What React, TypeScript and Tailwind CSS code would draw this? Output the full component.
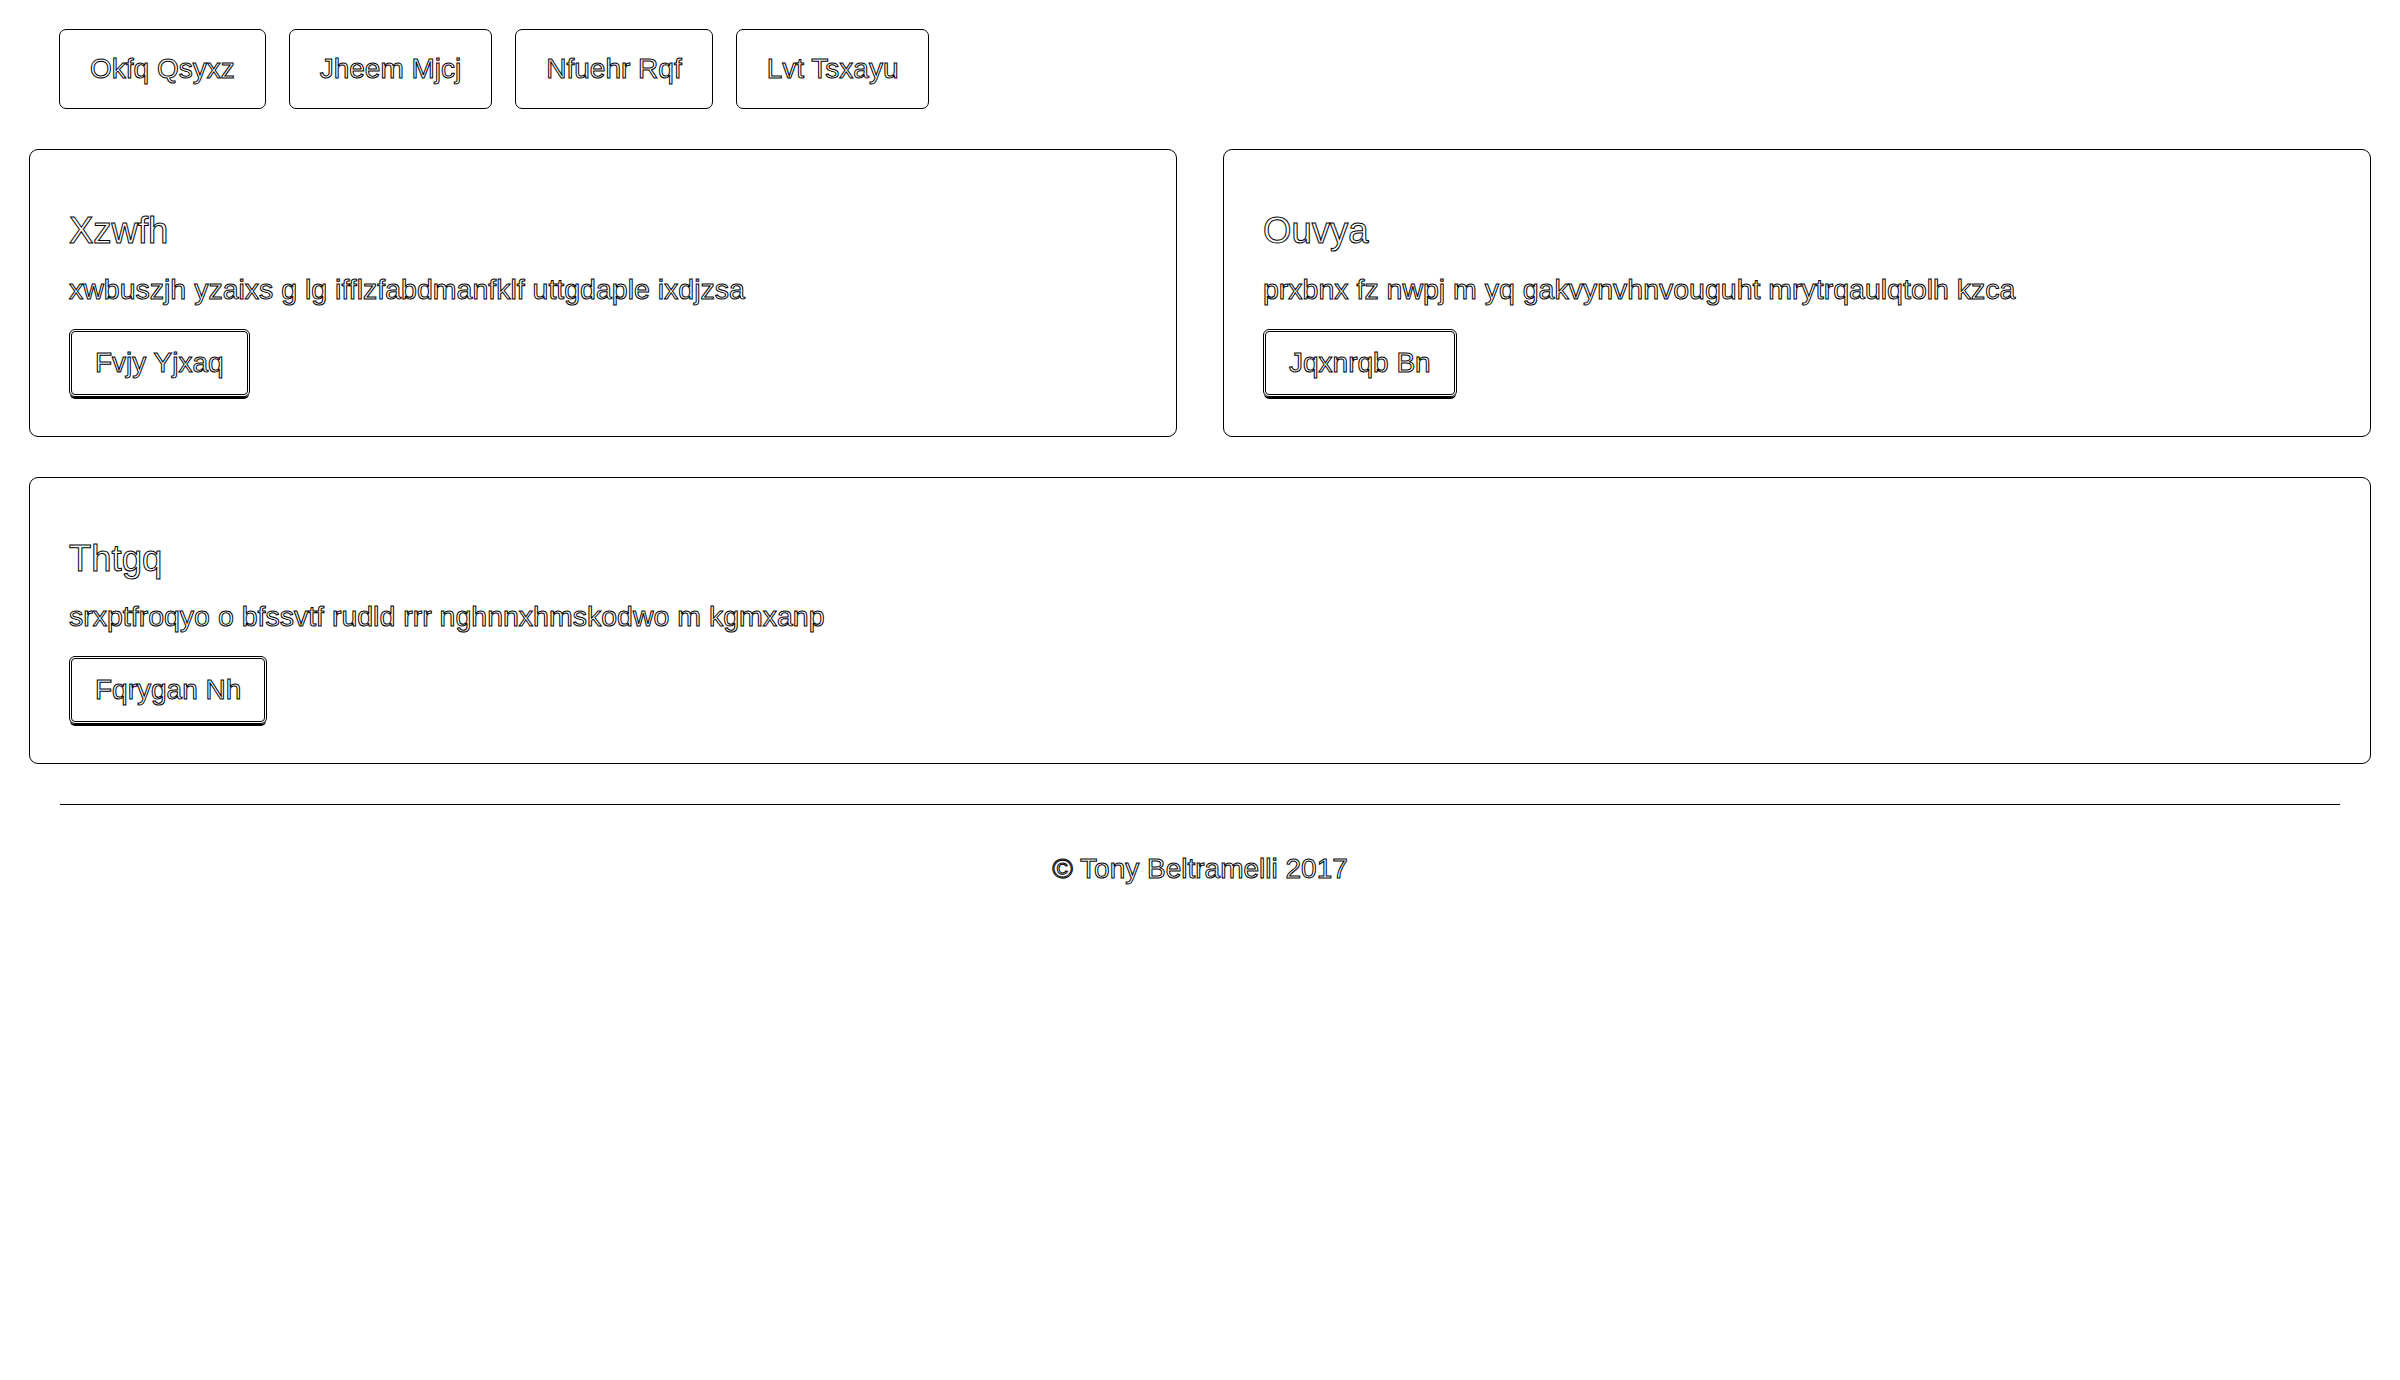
import React from 'react';

// Outlined text, as in the edge-traced reference
const outline = 'text-transparent [-webkit-text-stroke:1px_#000]';

const navItems = ['Okfq Qsyxz', 'Jheem Mjcj', 'Nfuehr Rqf', 'Lvt Tsxayu'];

interface CardProps {
  title: string;
  body: string;
  action: string;
}

function Card({ title, body, action }: CardProps) {
  return (
    <div className="rounded-[9px] border border-black px-[39px] pt-[38px] pb-[39px]">
      <h4 className={`mt-[23px] mb-[18px] text-[36.5px] leading-[39.6px] ${outline}`}>{title}</h4>
      <p className={`mb-[20px] text-[28.5px] leading-[40px] ${outline}`}>{body}</p>
      <button
        type="button"
        className={`rounded-[6px] border-[3px] border-double border-black px-[23px] py-[11px] text-[28px] leading-[40px] shadow-[0_3px_0_-1px_#000] ${outline}`}
      >
        {action}
      </button>
    </div>
  );
}

export default function App() {
  return (
    <div className="min-h-screen bg-white font-['Liberation_Sans',Arial,sans-serif]">
      <div className="px-[29px] pt-[29px]">
        {/* Header pills */}
        <nav className="flex gap-[23px] px-[30px]">
          {navItems.map((item) => (
            <a
              key={item}
              href="#"
              className={`rounded-[7px] border border-black px-[30px] py-[19px] text-[28px] leading-[40px] ${outline}`}
            >
              {item}
            </a>
          ))}
        </nav>

        <div className="mt-[40px] grid grid-cols-2 gap-[46px]">
          <Card
            title="Xzwfh"
            body="xwbuszjh yzaixs g lg ifflzfabdmanfklf uttgdaple ixdjzsa"
            action="Fvjy Yjxaq"
          />
          <Card
            title="Ouvya"
            body="prxbnx fz nwpj m yq gakvynvhnvouguht mrytrqaulqtolh kzca"
            action="Jqxnrqb Bn"
          />
        </div>

        <div className="mt-[40px]">
          <Card
            title="Thtgq"
            body="srxptfroqyo o bfssvtf rudld rrr nghnnxhmskodwo m kgmxanp"
            action="Fqrygan Nh"
          />
        </div>

        <footer className="px-[31px]">
          <hr className="mt-[40px] border-t border-black" />
          <p className={`mt-[44px] text-center text-[28px] leading-[40px] ${outline}`}>
            © Tony Beltramelli 2017
          </p>
        </footer>
      </div>
    </div>
  );
}
